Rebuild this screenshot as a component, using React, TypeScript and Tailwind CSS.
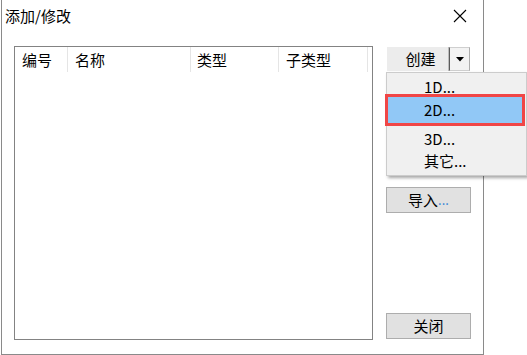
import React from "react";

const font = { fontFamily: '"Noto Sans CJK SC", "Noto Sans", sans-serif' };

export default function App() {
  return (
    <div className="relative w-[527px] h-[355px] bg-white overflow-hidden text-black" style={font}>
      <div className="ml-px w-[483px] h-[355px] border-l border-r border-b border-[#8a8a8a] bg-white flex flex-col">
        {/* Title bar */}
        <div className="h-[46px] flex items-start justify-between">
          <div className="pl-[3px] pt-[6px] text-[15px] leading-[20px]">添加/修改</div>
          <svg className="mt-[9px] mr-[16px]" width="14" height="14" viewBox="0 0 14 14">
            <path d="M1 1 L13 13 M13 1 L1 13" stroke="#000" strokeWidth="1.1" fill="none" />
          </svg>
        </div>
        {/* Body */}
        <div className="flex">
          {/* List box */}
          <div className="ml-[12px] w-[359px] h-[294px] border border-[#838383] bg-white">
            <div className="flex h-[26px] text-[15px] leading-[20px]">
              <div className="w-[53px] h-[25px] border-r border-[#e5e5e5] pl-[7px] pt-[3px]">编号</div>
              <div className="w-[123px] h-[25px] border-r border-[#e5e5e5] pl-[7px] pt-[3px]">名称</div>
              <div className="w-[88px] h-[25px] border-r border-[#e5e5e5] pl-[6px] pt-[3px]">类型</div>
              <div className="w-[89px] h-[25px] border-r border-[#e5e5e5] pl-[7px] pt-[3px]">子类型</div>
            </div>
          </div>
          {/* Buttons */}
          <div className="ml-[13px] w-[85px] h-[294px] flex flex-col">
            <div className="ml-px mt-px w-[83px] h-[24px] flex">
              <div className="w-[62px] h-[24px] bg-[#ececec] border-r border-[#bcbcbc] flex items-center justify-center text-[15px] pl-[6px]">创建</div>
              <div className="w-[21px] h-[24px] bg-[#f3f3f3] border-l border-[#5a5a5a] border-r border-t border-b border-r-[#adadad] border-t-[#cfcfcf] border-b-[#cfcfcf] flex items-center justify-center">
                <svg width="8" height="5" viewBox="0 0 8 5">
                  <path d="M0 0 H8 L4 4.5 Z" fill="#000" />
                </svg>
              </div>
            </div>
            <div className="mt-[116px] h-[26px] bg-[#e1e1e1] border border-[#adadad] flex items-center justify-center text-[15px] leading-[20px]">
              <span>导入</span>
              <span className="text-[#2a7fd4] text-[13px]">...</span>
            </div>
            <div className="mt-[100px] h-[26px] bg-[#e1e1e1] border border-[#adadad] flex items-center justify-center text-[15px] leading-[20px]">
              关闭
            </div>
          </div>
        </div>
      </div>

      {/* Dropdown menu */}
      <div className="absolute left-[386px] top-[72px] w-[141px] h-[104px] bg-[#f0f0f0] border border-[#cccccc] shadow-[2px_2px_3px_rgba(0,0,0,0.35)] flex flex-col pt-[4px] text-[15px] leading-[20px]">
        <div className="h-[20px] flex items-center pl-[37px]">1D...</div>
        <div className="ml-px w-[134px] h-[26px] bg-[#91c8f6] outline-[3px] outline-solid outline-[#f04646] flex items-center pl-[36px] shadow-[0_0_3px_rgba(0,0,0,0.3)]">2D...</div>
        <div className="mt-[5px] h-[22px] flex items-center pl-[37px]">3D...</div>
        <div className="h-[22px] flex items-center pl-[37px]">其它...</div>
      </div>
    </div>
  );
}
